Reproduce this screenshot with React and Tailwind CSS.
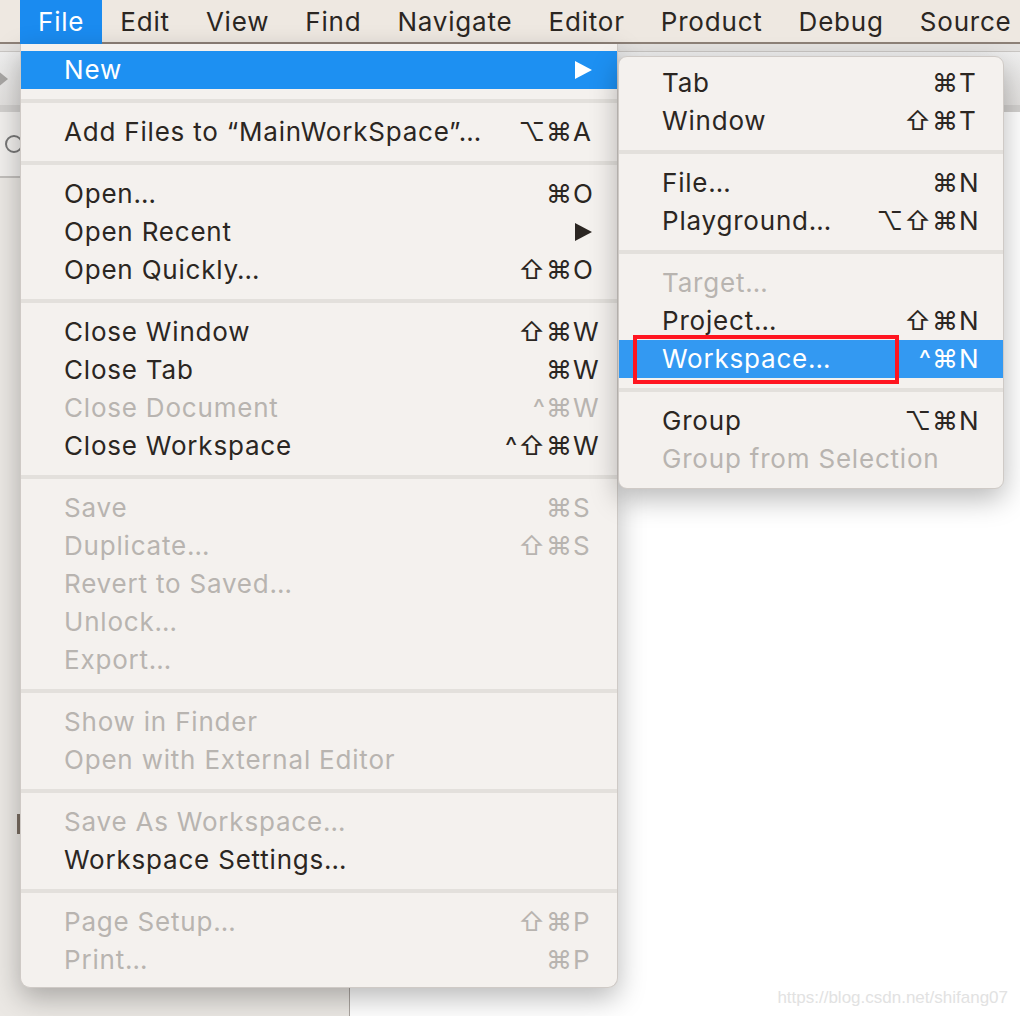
import React from 'react';

const font = "font-['Inter','DejaVu_Sans',sans-serif]";

const mainMenu = [
  [{ label: 'New', sub: true, active: true }],
  [{ label: 'Add Files to “MainWorkSpace”…', mods: '⌥⌘', k: 'A' }],
  [
    { label: 'Open…', mods: '⌘', k: 'O' },
    { label: 'Open Recent', sub: true },
    { label: 'Open Quickly…', mods: '⇧⌘', k: 'O' },
  ],
  [
    { label: 'Close Window', mods: '⇧⌘', k: 'W' },
    { label: 'Close Tab', mods: '⌘', k: 'W' },
    { label: 'Close Document', mods: '^⌘', k: 'W', disabled: true },
    { label: 'Close Workspace', mods: '^⇧⌘', k: 'W' },
  ],
  [
    { label: 'Save', mods: '⌘', k: 'S', disabled: true },
    { label: 'Duplicate…', mods: '⇧⌘', k: 'S', disabled: true },
    { label: 'Revert to Saved…', disabled: true },
    { label: 'Unlock…', disabled: true },
    { label: 'Export…', disabled: true },
  ],
  [
    { label: 'Show in Finder', disabled: true },
    { label: 'Open with External Editor', disabled: true },
  ],
  [
    { label: 'Save As Workspace…', disabled: true },
    { label: 'Workspace Settings…' },
  ],
  [
    { label: 'Page Setup…', mods: '⇧⌘', k: 'P', disabled: true },
    { label: 'Print…', mods: '⌘', k: 'P', disabled: true },
  ],
];

const newMenu = [
  [
    { label: 'Tab', mods: '⌘', k: 'T' },
    { label: 'Window', mods: '⇧⌘', k: 'T' },
  ],
  [
    { label: 'File…', mods: '⌘', k: 'N' },
    { label: 'Playground…', mods: '⌥⇧⌘', k: 'N' },
  ],
  [
    { label: 'Target…', disabled: true },
    { label: 'Project…', mods: '⇧⌘', k: 'N' },
    { label: 'Workspace…', mods: '^⌘', k: 'N', active: true, boxed: true },
  ],
  [
    { label: 'Group', mods: '⌥⌘', k: 'N' },
    { label: 'Group from Selection', disabled: true },
  ],
];

const menuBar = ['File', 'Edit', 'View', 'Find', 'Navigate', 'Editor', 'Product', 'Debug', 'Source'];

const Row = ({ item, activeBg }) => {
  const color = item.active
    ? 'text-white'
    : item.disabled
    ? 'text-[#b8b4b0]'
    : 'text-[#2b2622]';
  return (
    <div
      className={`relative flex items-center h-[38px] pl-[43px] pr-[10px] text-[26px] leading-[38px] ${color} ${
        item.active ? activeBg : ''
      }`}
    >
      <span className="flex-1 whitespace-nowrap tracking-[0.8px]">{item.label}</span>
      {item.mods && <span className="whitespace-nowrap tracking-[1px]">{item.mods}</span>}
      <span className="w-[34px] flex items-center">
        {item.k}
        {item.sub && (
          <svg width="17" height="18" viewBox="0 0 17 18" className="ml-[2px]">
            <path d="M0 0 L17 9 L0 18 Z" fill={item.active ? '#ffffff' : '#2b2622'} />
          </svg>
        )}
      </span>
      {item.boxed && (
        <div className="absolute left-[14px] top-[-5px] w-[266px] h-[49px] border-[4px] border-[#ff1520]" />
      )}
    </div>
  );
};

const Groups = ({ groups, activeBg }) => (
  <>
    {groups.map((group, gi) => (
      <div key={gi}>
        {gi > 0 && (
          <div className="h-[24px] flex items-center">
            <div className="w-full h-[4px] bg-[#e3e0dc]" />
          </div>
        )}
        {group.map((item) => (
          <Row key={item.label} item={item} activeBg={activeBg} />
        ))}
      </div>
    ))}
  </>
);

export default function App() {
  return (
    <div className={`relative w-[1020px] h-[1016px] overflow-hidden bg-white ${font}`}>
      {/* menu bar */}
      <div className="flex items-center h-[44px] pl-[20px] bg-[#eee8e1] shadow-[inset_0_-2px_0_#8d8178] text-[26px] tracking-[0.8px] text-[#2b2622]">
        {menuBar.map((m) => (
          <span
            key={m}
            className={`h-[44px] leading-[44px] px-[18px] whitespace-nowrap ${
              m === 'File' ? 'bg-[#1a8bf0] text-white' : ''
            }`}
          >
            {m}
          </span>
        ))}
      </div>

      {/* window toolbar behind the menus */}
      <div className="h-[8px] bg-[#e4e2e0] border-b border-[#c9c6c3]" />
      <div className="h-[53px] bg-gradient-to-b from-[#eeeeee] to-[#e2e0de] flex items-center">
        <svg width="10" height="16" viewBox="0 0 10 16" className="ml-[-2px]">
          <path d="M0 0 L10 8 L0 16 Z" fill="#a8a6a4" />
        </svg>
      </div>
      <div className="h-[7px] bg-[#d2d0ce]" />

      <div className="flex h-[904px]">
        <div className="w-[350px] flex flex-col bg-[#ebe8e4] border-r border-[#aaa49f]">
          <div className="h-[66px] bg-[#f1efed] border-b-[2px] border-[#c2bfbc] flex items-center">
            <div className="ml-[5px] w-[18px] h-[18px] rounded-full border-[2px] border-[#777]" />
          </div>
          <div className="flex-1 pt-[636px]">
            <div className="w-[20px] h-[20px] border-r-[3px] border-[#7a6d62]" />
          </div>
        </div>
        <div className="flex-1 bg-white" />
      </div>

      {/* File menu */}
      <div className="absolute left-[20px] top-[44px] w-[598px] pt-[7px] pb-[8px] bg-[#f4f1ee] rounded-b-[10px] border border-t-0 border-[#cfcac6] shadow-[0_10px_28px_rgba(0,0,0,0.28)]">
        <Groups groups={mainMenu} activeBg="bg-[#1d90f2]" />
      </div>

      {/* New submenu */}
      <div className="absolute left-[618px] top-[56px] w-[386px] pt-[7px] pb-[10px] bg-[#f4f1ee] rounded-[9px] border border-[#cfcac6] shadow-[0_10px_28px_rgba(0,0,0,0.28)]">
        <Groups groups={newMenu} activeBg="bg-[#3399f2]" />
      </div>

      {/* watermark */}
      <div className="absolute right-[12px] bottom-[6px] text-[17px] text-[#e2e2e2] font-['Liberation_Sans',sans-serif]">
        https://blog.csdn.net/shifang07
      </div>
    </div>
  );
}
